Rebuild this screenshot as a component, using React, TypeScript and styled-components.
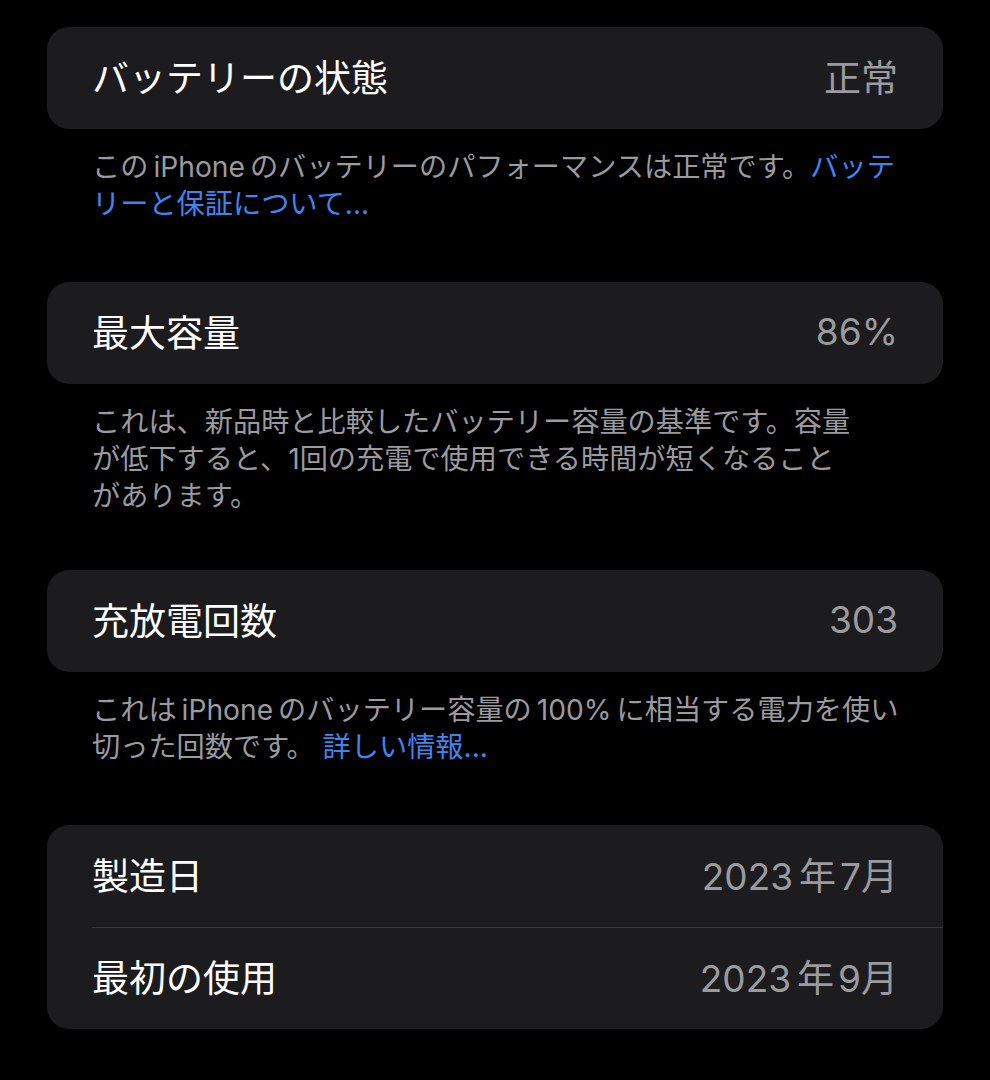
import styled, { createGlobalStyle } from 'styled-components';

const GlobalStyle = createGlobalStyle`
  html, body {
    margin: 0;
    background: #000;
  }
  body {
    font-family: Inter, "Noto Sans CJK JP", sans-serif;
    -webkit-font-smoothing: antialiased;
  }
`;

const Page = styled.div`
  background: #000;
  min-height: 1080px;
  padding: 27px 47px 0 47px;
  box-sizing: border-box;
`;

const Section = styled.section<{ $gap?: number }>`
  margin-bottom: ${({ $gap = 59 }) => $gap}px;
`;

const Card = styled.div`
  background: #1c1c1e;
  border-radius: 22px;
  overflow: hidden;
`;

const Row = styled.div<{ $divided?: boolean }>`
  height: 102px;
  display: flex;
  align-items: center;
  justify-content: space-between;
  padding: 0 45px 4px 45px;
  position: relative;
  box-sizing: border-box;

  ${({ $divided }) =>
    $divided &&
    `
    &::before {
      content: '';
      position: absolute;
      top: 0;
      left: 45px;
      right: 0;
      height: 1px;
      background: #38383a;
    }
  `}
`;

const Label = styled.span`
  font-family: Inter, "Noto Sans CJK JP", sans-serif;
  font-size: 37px;
  color: #ffffff;
`;

const Value = styled.span`
  font-family: Inter, "Noto Sans CJK JP", sans-serif;
  font-size: 37px;
  color: #9a9a9f;
`;

const Footer = styled.p`
  margin: 0;
  padding: 20px 0 0 45px;
  font-family: Inter, "Noto Sans CJK JP", sans-serif;
  font-size: 28.2px;
  line-height: 37px;
  color: #9a9a9f;
  white-space: nowrap;
`;

const Link = styled.a`
  color: #3a87f4;
  text-decoration: none;
`;

const Gap = styled.span<{ $w?: number }>`
  display: inline-block;
  width: ${({ $w = 5 }) => $w}px;
`;

export default function App() {
  return (
    <>
      <GlobalStyle />
      <Page>
        <Section $gap={59}>
          <Card>
            <Row>
              <Label>バッテリーの状態</Label>
              <Value>正常</Value>
            </Row>
          </Card>
          <Footer>
            この<Gap />iPhone<Gap />のバッテリーのパフォーマンスは正常です。<Link href="#">バッテ</Link>
            <br />
            <Link href="#">リーと保証について...</Link>
          </Footer>
        </Section>

        <Section $gap={55}>
          <Card>
            <Row>
              <Label>最大容量</Label>
              <Value>86%</Value>
            </Row>
          </Card>
          <Footer>
            これは、新品時と比較したバッテリー容量の基準です。容量
            <br />
            が低下すると、1回の充電で使用できる時間が短くなること
            <br />
            があります。
          </Footer>
        </Section>

        <Section $gap={59}>
          <Card>
            <Row>
              <Label>充放電回数</Label>
              <Value>303</Value>
            </Row>
          </Card>
          <Footer>
            これは<Gap />iPhone<Gap />のバッテリー容量の<Gap />100%<Gap />に相当する電力を使い
            <br />
            切った回数です。 <Link href="#">詳しい情報...</Link>
          </Footer>
        </Section>

        <Section $gap={0}>
          <Card>
            <Row>
              <Label>製造日</Label>
              <Value>2023<Gap $w={6} />年<Gap $w={4} />7月</Value>
            </Row>
            <Row $divided>
              <Label>最初の使用</Label>
              <Value>2023<Gap $w={6} />年<Gap $w={4} />9月</Value>
            </Row>
          </Card>
        </Section>
      </Page>
    </>
  );
}
